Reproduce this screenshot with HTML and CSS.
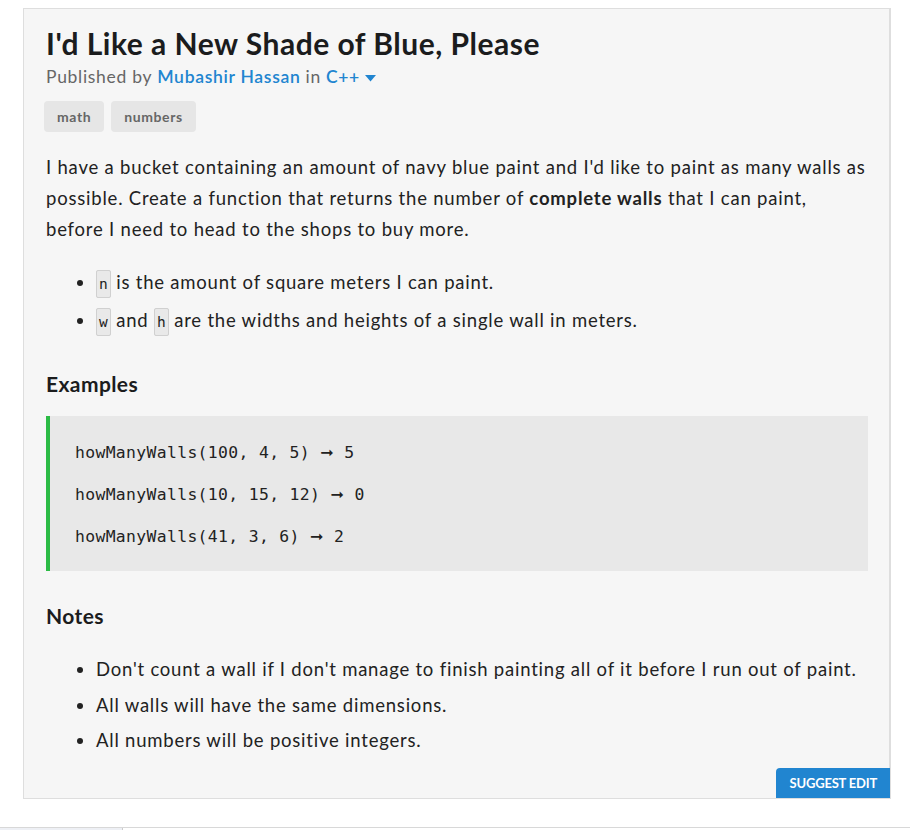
FILE: index.html
```html
<!DOCTYPE html>
<html>
<head>
<meta charset="utf-8">
<link rel="stylesheet" href="styles.css">
</head>
<body>
<div class="page">
  <article class="card">
    <h1 class="title">I'd Like a New Shade of Blue, Please</h1>
    <div class="meta">Published by <a class="link">Mubashir Hassan</a> in <a class="link">C++</a><svg class="caret" width="11" height="7" viewBox="0 0 11 7"><path d="M0 0h11L5.5 6.5z" fill="#2185d0"/></svg></div>
    <div class="tags"><span class="tag">math</span><span class="tag">numbers</span></div>
    <p class="text">I have a bucket containing an amount of navy blue paint and I'd like to paint as many walls as possible. Create a function that returns the number of <strong>complete walls</strong> that I can paint, before I need to head to the shops to buy more.</p>
    <ul class="list first">
      <li><code>n</code> is the amount of square meters I can paint.</li>
      <li><code>w</code> and <code>h</code> are the widths and heights of a single wall in meters.</li>
    </ul>
    <h2 class="heading">Examples</h2>
    <div class="examples">
      <div class="ex">howManyWalls(100, 4, 5) <span class="arrow">➞</span> 5</div>
      <div class="ex">howManyWalls(10, 15, 12) <span class="arrow">➞</span> 0</div>
      <div class="ex">howManyWalls(41, 3, 6) <span class="arrow">➞</span> 2</div>
    </div>
    <h2 class="heading notes">Notes</h2>
    <ul class="list notes-list">
      <li>Don't count a wall if I don't manage to finish painting all of it before I run out of paint.</li>
      <li>All walls will have the same dimensions.</li>
      <li>All numbers will be positive integers.</li>
    </ul>
    <div class="actions"><button class="suggest">SUGGEST EDIT</button></div>
  </article>
  <div class="bottombar"><span class="bottomtab"></span></div>
</div>
</body>
</html>
```
FILE: styles.css
```css
* { box-sizing: border-box; }
html, body { margin: 0; padding: 0; background: #fff; }
body { font-family: Lato, "Noto Sans", sans-serif; color: #222; }
.page { width: 910px; height: 830px; position: relative; overflow: hidden; padding-top: 8px; }
.card {
  margin-left: 23px;
  width: 868px;
  height: 791px;
  background: #f6f6f6;
  border: 1px solid #dedede;
  border-right: 2px solid #dedede;
  padding: 13px 21px 0 22px;
  display: flex;
  flex-direction: column;
  position: relative;
}
.title { font-size: 30px; font-weight: 700; margin: 0; line-height: 42px; color: #1b1c1d; letter-spacing: 0.5px; }
.meta { font-size: 17.5px; color: #666; line-height: 24px; margin-top: 1px; display: flex; align-items: center; gap: 5px; letter-spacing: 0.7px; }
.link { color: #2185d0; font-weight: 600; }
.caret { margin-left: 0; margin-top: 2px; }
.tags { display: flex; gap: 7px; margin-top: 12px; margin-left: -2px; }
.tag { background: #e6e6e6; color: #666; font-weight: 700; font-size: 14px; letter-spacing: 0.6px; border-radius: 4px; padding: 0 13px; line-height: 31px; height: 31px; }
.text { font-size: 18.5px; line-height: 31px; margin: 20px 0 0; letter-spacing: 0.79px; }
.text strong { font-weight: 700; }
.list { margin: 0; padding-left: 50px; font-size: 18.5px; letter-spacing: 0.78px; }
.list.first { margin-top: 18px; }
.list.first li { line-height: 38px; }
code { font-family: "DejaVu Sans Mono", monospace; font-size: 14.5px; letter-spacing: 0; line-height: 1; background: #e9e9e9; border: 1px solid #d0d0d0; padding: 5px 2px; border-radius: 2px; }
.heading { font-size: 21px; font-weight: 700; margin: 30px 0 0; line-height: 30px; color: #1b1c1d; letter-spacing: 0.4px; }
.examples { margin-top: 17px; background: #e8e8e8; border-left: 4px solid #2bbb45; padding: 16px 0 13px 25px; }
.ex { font-family: "DejaVu Sans Mono", monospace; font-size: 16.4px; line-height: 42px; color: #222; letter-spacing: 0.35px; }
.arrow { font-family: "DejaVu Sans", sans-serif; font-size: 16px; font-weight: 700; line-height: 1; }
.heading.notes { margin-top: 30px; }
.notes-list { margin-top: 21px; }
.notes-list li { line-height: 35.5px; }
.actions { margin-top: auto; display: flex; justify-content: flex-end; margin-right: -22px; }
.suggest { background: #2185d0; color: #fff; border: 0; font-family: Lato, sans-serif; font-weight: 700; font-size: 13px; letter-spacing: -0.2px; height: 30px; padding: 0 13px 0 14px; border-radius: 4px 0 0 0; }
.bottombar { position: absolute; left: 0; right: 0; bottom: 0; height: 3px; border-top: 1px solid #d8d8d8; }
.bottomtab { display: block; width: 123px; height: 3px; background: #eef0f5; border-right: 1px solid #ccc; }
```
